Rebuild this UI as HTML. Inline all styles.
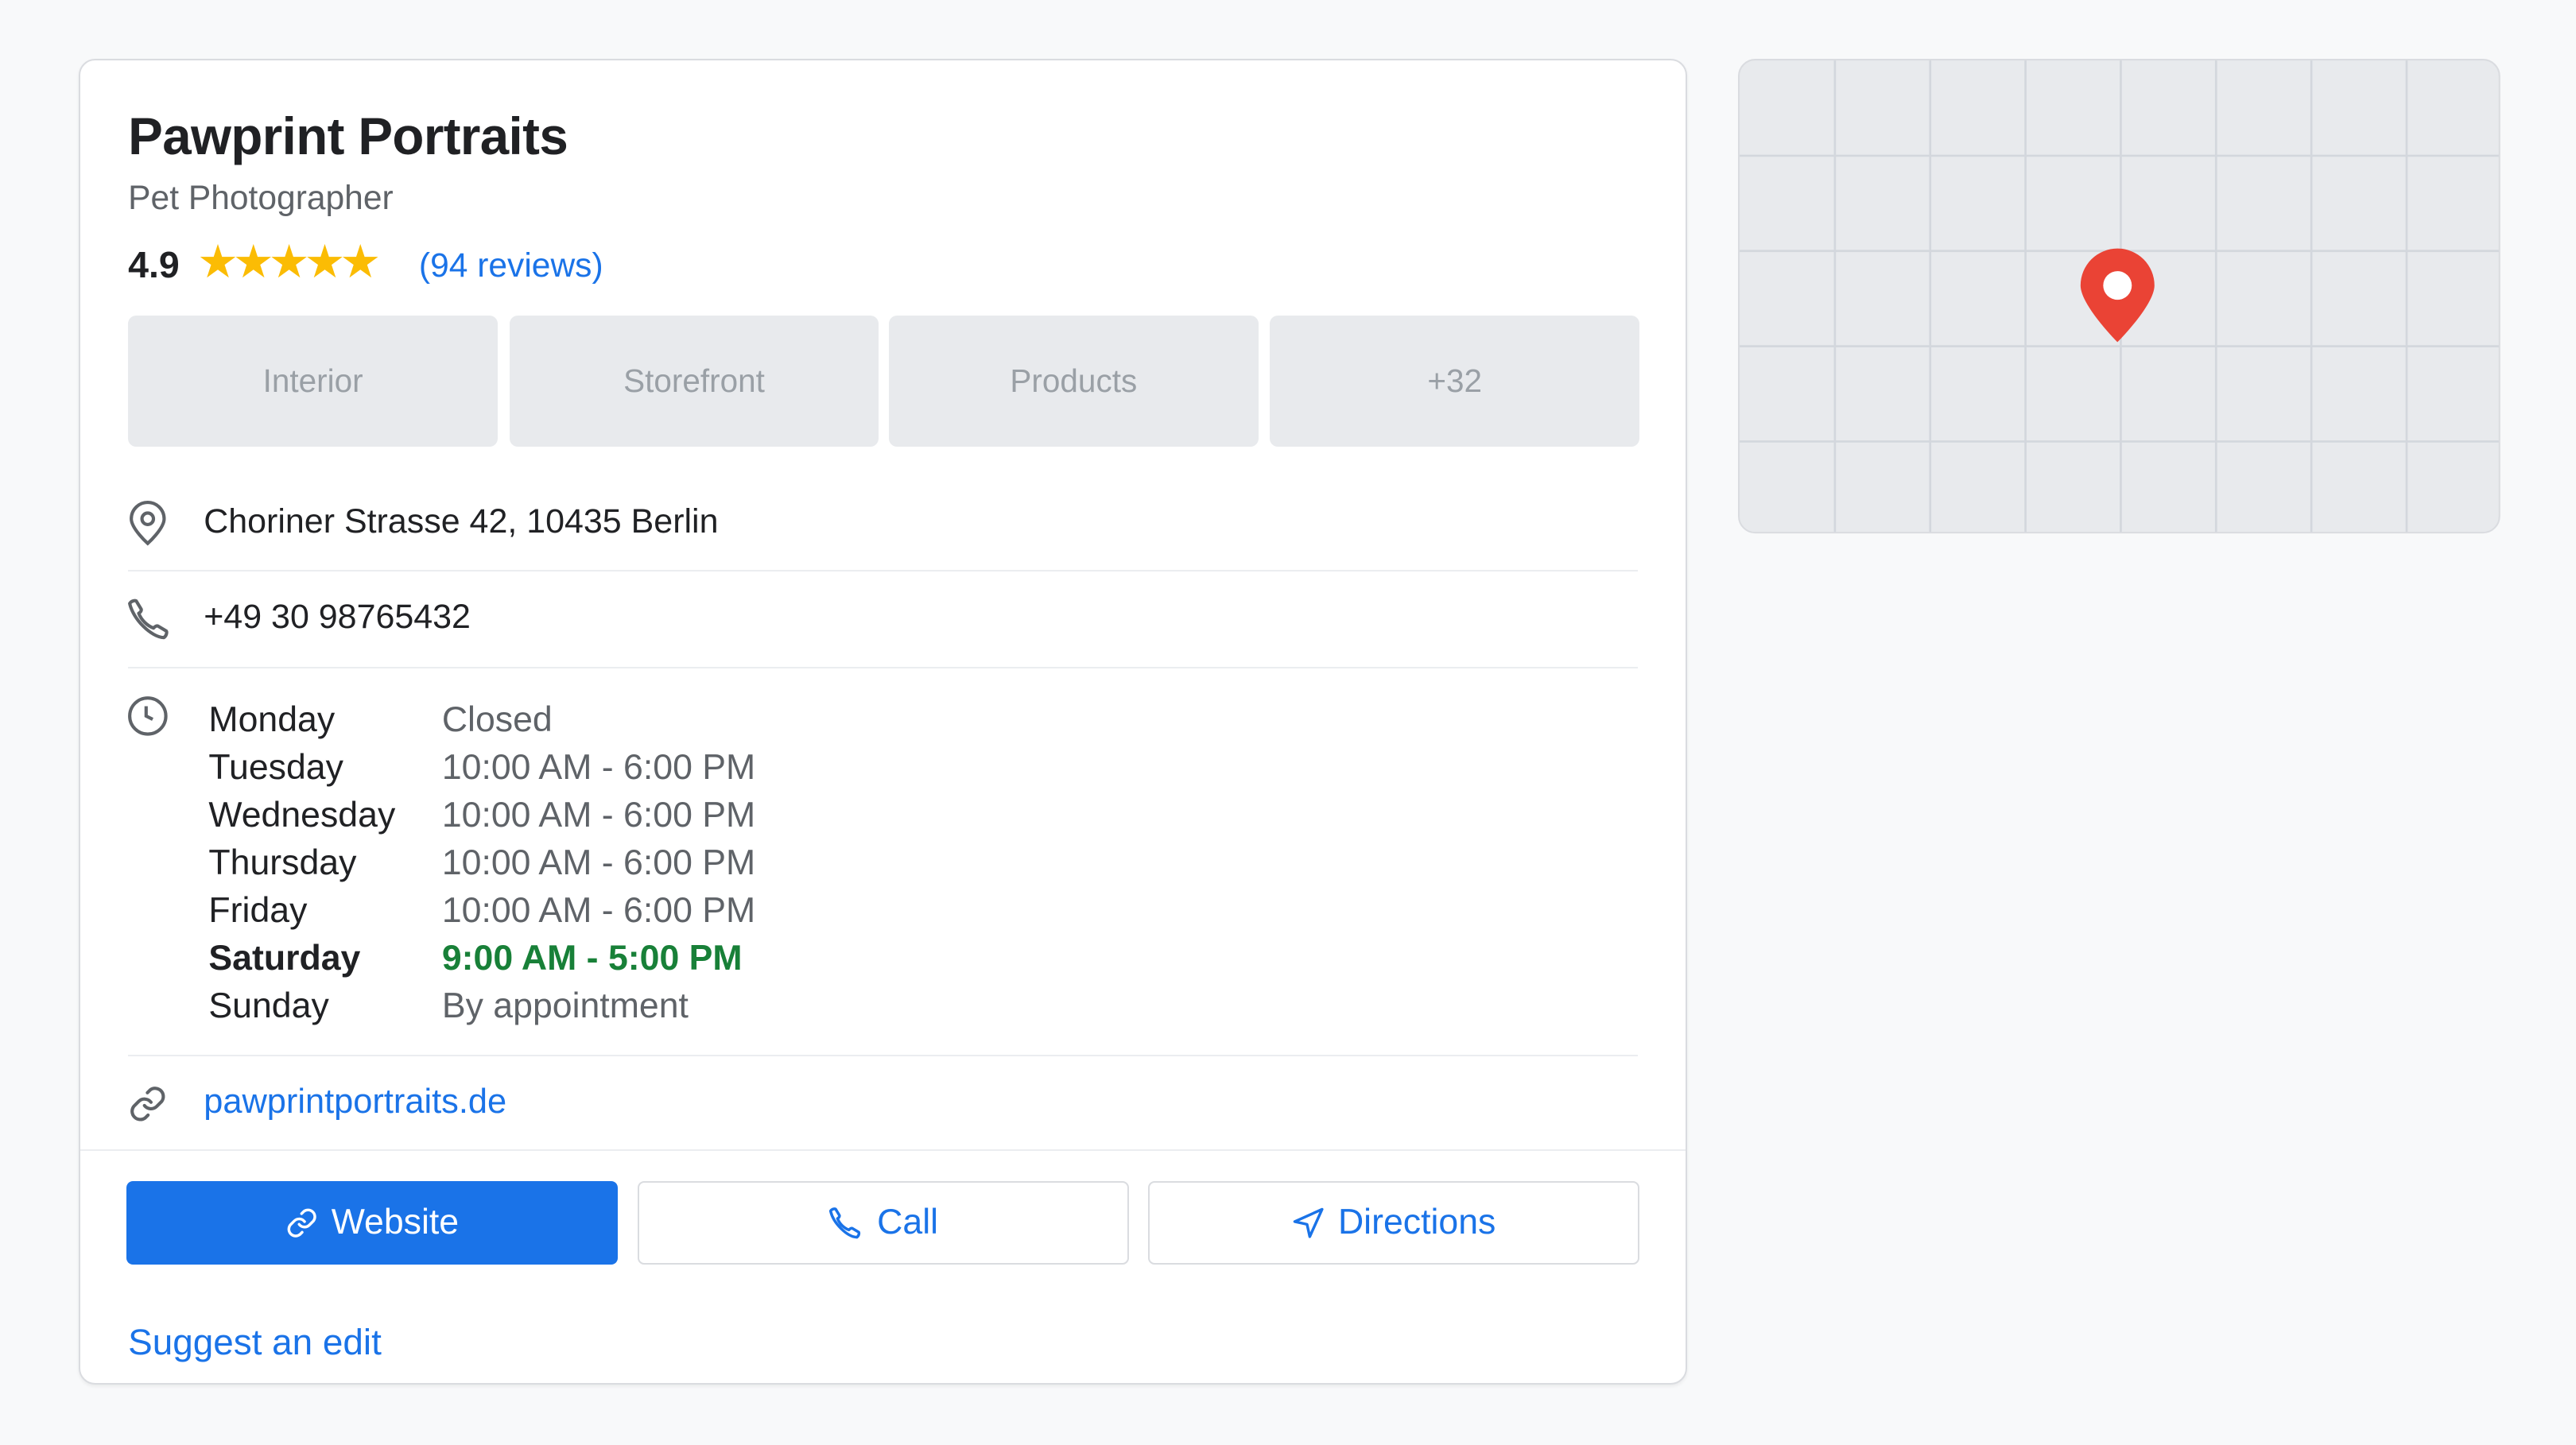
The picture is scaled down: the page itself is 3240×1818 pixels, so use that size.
<!DOCTYPE html>
<html><head><meta charset="utf-8"><style>
html,body{margin:0;padding:0;background:#f8f9fa;width:3240px;height:1818px;overflow:hidden}
#w{position:absolute;left:0;top:0;width:1568px;height:880px;zoom:2.0663;font-family:"Liberation Sans",Arial,sans-serif;color:#202124}
.a{position:absolute;white-space:nowrap}
.card{position:absolute;left:48px;top:36px;width:977px;height:805px;background:#fff;border:1px solid #dadce0;border-radius:10px;box-shadow:0 1px 2px rgba(0,0,0,.06)}
.tile{position:absolute;top:192px;height:80px;width:225px;background:#e8eaed;border-radius:5px;color:#9aa0a6;font-size:19.6px;display:flex;align-items:center;justify-content:center}
.hr{position:absolute;left:78px;width:919px;height:1px;background:#ebedf0}
.d{position:absolute;left:127px;font-size:21.6px;line-height:29px}
.t{position:absolute;left:269px;font-size:21.6px;line-height:29px;color:#5f6368}
.btn{position:absolute;top:719px;height:51px;width:299px;border-radius:4px;display:flex;align-items:center;justify-content:center;font-size:21.6px;gap:8px;box-sizing:border-box}
.o{border:1px solid #dadce0;color:#1a73e8;background:#fff}
</style></head><body><div id="w">
<div class="card"></div>
<div class="a" style="left:78px;top:65px;font-size:31.7px;font-weight:bold;letter-spacing:-0.3px">Pawprint Portraits</div>
<div class="a" style="left:78px;top:109px;font-size:20.6px;color:#5f6368">Pet Photographer</div>
<div class="a" style="left:78px;top:148px;font-size:22.5px;font-weight:bold;">4.9</div>
<div class="a" style="left:120px;top:143px;font-size:28px;color:#fbbc04;letter-spacing:-3.4px">★★★★★</div>
<div class="a" style="left:255px;top:150px;font-size:20.6px;color:#1a73e8">(94 reviews)</div>
<div class="tile" style="left:78px">Interior</div>
<div class="tile" style="left:310px">Storefront</div>
<div class="tile" style="left:541px">Products</div>
<div class="tile" style="left:773px">+32</div>
<svg class="a" style="left:78px;top:305px" width="24" height="28" viewBox="0 0 24 28" fill="none" stroke="#5f6368" stroke-width="2"><path d="M12 26C12 26 2 17 2 11a10 10 0 0 1 20 0c0 6-10 15-10 15z"/><circle cx="12" cy="11" r="3.5"/></svg>
<div class="a" style="left:124px;top:306px;font-size:20.8px">Choriner Strasse 42, 10435 Berlin</div>
<div class="hr" style="top:347px"></div>
<svg class="a" style="left:77px;top:364px" width="28" height="26" viewBox="0 0 28 26" fill="none" stroke="#5f6368" stroke-width="2" stroke-linejoin="round"><path d="M2 3.5c1-1.5 3-2 4-1.5l3 5c.3.8-.5 2-1.5 2.5 1.5 4 5 7.5 9 9 .8-1 2-1.6 2.8-1.2l5 3c.5 1 0 3-1.5 4C15 24 4 13 2 3.5z"/></svg>
<div class="a" style="left:124px;top:364px;font-size:20.8px">+49 30 98765432</div>
<div class="hr" style="top:406px"></div>
<svg class="a" style="left:77px;top:423px" width="26" height="26" viewBox="0 0 26 26" fill="none" stroke="#5f6368" stroke-width="2"><circle cx="13" cy="13" r="11"/><path d="M12 7v6l4 2"/></svg>
<div class="d" style="top:424px">Monday</div><div class="t" style="top:424px">Closed</div>
<div class="d" style="top:453px">Tuesday</div><div class="t" style="top:453px">10:00 AM - 6:00 PM</div>
<div class="d" style="top:482px">Wednesday</div><div class="t" style="top:482px">10:00 AM - 6:00 PM</div>
<div class="d" style="top:511px">Thursday</div><div class="t" style="top:511px">10:00 AM - 6:00 PM</div>
<div class="d" style="top:540px">Friday</div><div class="t" style="top:540px">10:00 AM - 6:00 PM</div>
<div class="d" style="top:569px;font-weight:bold">Saturday</div><div class="t" style="top:569px;font-weight:bold;color:#188038">9:00 AM - 5:00 PM</div>
<div class="d" style="top:598px">Sunday</div><div class="t" style="top:598px">By appointment</div>
<div class="hr" style="top:642px"></div>
<svg class="a" style="left:78px;top:659px" width="24" height="26" viewBox="0 0 24 24" fill="none" stroke="#5f6368" stroke-width="2" stroke-linecap="round"><path d="M10 13a5 5 0 0 0 7.5.5l3-3a5 5 0 0 0-7-7l-1.7 1.7"/><path d="M14 11a5 5 0 0 0-7.5-.5l-3 3a5 5 0 0 0 7 7l1.7-1.7"/></svg>
<div class="a" style="left:124px;top:659px;font-size:21px;color:#1a73e8">pawprintportraits.de</div>
<div class="a" style="left:49px;top:700px;width:977px;height:1px;background:#ebedf0"></div>
<div class="btn" style="left:77px;background:#1a73e8;color:#fff"><svg width="20" height="20" viewBox="0 0 24 24" fill="none" stroke="#fff" stroke-width="2" stroke-linecap="round"><path d="M10 13a5 5 0 0 0 7.5.5l3-3a5 5 0 0 0-7-7l-1.7 1.7"/><path d="M14 11a5 5 0 0 0-7.5-.5l-3 3a5 5 0 0 0 7 7l1.7-1.7"/></svg>Website</div>
<div class="btn o" style="left:388px"><svg width="22" height="20" viewBox="0 0 28 26" fill="none" stroke="#1a73e8" stroke-width="2.2" stroke-linejoin="round"><path d="M2 3.5c1-1.5 3-2 4-1.5l3 5c.3.8-.5 2-1.5 2.5 1.5 4 5 7.5 9 9 .8-1 2-1.6 2.8-1.2l5 3c.5 1 0 3-1.5 4C15 24 4 13 2 3.5z"/></svg>Call</div>
<div class="btn o" style="left:699px"><svg width="20" height="20" viewBox="0 0 24 24" fill="none" stroke="#1a73e8" stroke-width="2" stroke-linejoin="round"><path d="M22 2L2 11l9 2 2 9z"/></svg>Directions</div>
<div class="a" style="left:78px;top:804px;font-size:22.2px;color:#1a73e8">Suggest an edit</div>
<svg class="a" style="left:1058px;top:36px" width="464" height="289" viewBox="0 0 464 289">
<defs><clipPath id="c"><rect x="0.5" y="0.5" width="463" height="288" rx="10"/></clipPath></defs>
<g clip-path="url(#c)"><rect width="464" height="289" fill="#e8eaed"/>
<g stroke="#d3d7dd" stroke-width="1.3">
<path d="M59 0V289M117 0V289M175 0V289M233 0V289M291 0V289M349 0V289M407 0V289M0 59H464M0 117H464M0 175H464M0 233H464"/></g></g>
<rect x="0.5" y="0.5" width="463" height="288" rx="10" fill="none" stroke="#dadce0"/>
<path d="M231 172.5C231 172.5 208.5 150 208.5 138a22.5 22.5 0 0 1 45 0c0 12-22.5 34.5-22.5 34.5z" fill="#ea4335"/>
<circle cx="231" cy="138" r="8.7" fill="#fff"/>
</svg>
</div></body></html>
